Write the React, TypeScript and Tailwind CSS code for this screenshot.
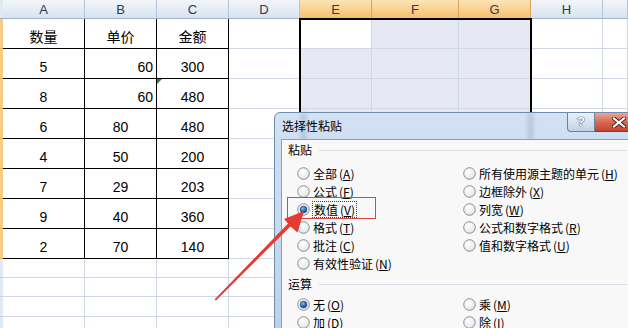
import React from 'react';
import clsx from 'clsx';

const COLS = ['A', 'B', 'C', 'D', 'E', 'F', 'G', 'H', ''];

const DATA: string[][] = [
  ['数量', '单价', '金额'],
  ['5', '60', '300'],
  ['8', '60', '480'],
  ['6', '80', '480'],
  ['4', '50', '200'],
  ['7', '29', '203'],
  ['9', '40', '360'],
  ['2', '70', '140'],
];

const ROW_COUNT = 12;

function HeaderCell({ label, sel }: { label: string; sel: boolean }) {
  return (
    <div
      className={clsx(
        'flex items-center justify-center border-r border-b text-[13px] leading-none text-[#2c3b4e]',
        sel
          ? 'bg-linear-to-b from-[#fde4b6] to-[#f5c06b] border-r-[#dba458] border-b-[#c9954c]'
          : 'bg-linear-to-b from-[#f2f6fb] to-[#d9e3ee] border-r-[#b6c5d7] border-b-[#9fb3c9]'
      )}
    >
      {label}
    </div>
  );
}

function Cell({ r, c }: { r: number; c: number }) {
  const inTable = r <= 8 && c <= 3;
  const inSel = r <= 8 && c >= 5 && c <= 7;
  const active = r === 1 && c === 5;
  const text = inTable ? DATA[r - 1][c - 1] : '';
  const right = c === 2 && (r === 2 || r === 3);
  return (
    <div
      className={clsx(
        'relative flex items-end border-r border-b text-[14px] leading-[17px] text-black',
        inTable ? 'border-black' : 'border-[#d0d7e5]',
        inSel && !active ? 'bg-[#e6e9f3]' : 'bg-white',
        right ? 'justify-end pr-[3px]' : 'justify-center'
      )}
    >
      {r === 3 && c === 3 && (
        <span className="absolute left-0 top-0 h-0 w-0 border-t-[5px] border-r-[5px] border-t-[#1d8a2c] border-r-transparent" />
      )}
      <span className="pb-[2px]">{text}</span>
    </div>
  );
}

function Sheet() {
  const cells: React.ReactNode[] = [];
  cells.push(<div key="corner" className="border-b border-[#9fb3c9] bg-[#dfe8f3]" />);
  COLS.forEach((l, i) =>
    cells.push(<HeaderCell key={'h' + i} label={l} sel={i >= 4 && i <= 6} />)
  );
  for (let r = 1; r <= ROW_COUNT; r++) {
    cells.push(
      <div
        key={'rh' + r}
        className={clsx(
          'border-b',
          r <= 8 ? 'bg-[#f7cd86] border-[#e4ae5c]' : 'bg-[#e1e9f3] border-[#c5d3e3]'
        )}
      />
    );
    for (let c = 1; c <= 9; c++) cells.push(<Cell key={r + '-' + c} r={r} c={c} />);
  }
  return (
    <div className="grid grid-cols-[3px_82px_72px_72px_71px_72px_87px_72px_72px_25px] grid-rows-[19px_repeat(8,30px)_19px_19px_20px_20px]">
      {cells}
    </div>
  );
}

function Radio({ checked }: { checked?: boolean }) {
  return (
    <svg width="13" height="13" viewBox="0 0 13 13" className="shrink-0">
      <circle cx="6.5" cy="6.5" r="5.8" fill="url(#radioBg)" stroke="#8d9196" strokeWidth="1" />
      {checked && <circle cx="6.5" cy="6.5" r="3.4" fill="url(#radioDot)" stroke="#1d4f86" strokeWidth="0.6" />}
    </svg>
  );
}

function Option({ label, acc, checked, focus }: { label: string; acc: string; checked?: boolean; focus?: boolean }) {
  return (
    <div className="flex h-[18px] items-center">
      <Radio checked={checked} />
      <span
        className={clsx(
          'ml-[3px] leading-[15px]',
          focus && 'outline outline-1 outline-dotted outline-[#444] px-px'
        )}
      >
        {label}
        <span className="ml-[2px]">(<u>{acc}</u>)</span>
      </span>
    </div>
  );
}

function Section({ title }: { title: string }) {
  return (
    <div className="flex h-[18px] items-center pl-[6px]">
      <span>{title}</span>
      <div className="ml-[7px] mr-[6px] h-px flex-1 bg-[#d6dee7]" />
    </div>
  );
}

function Dialog() {
  return (
    <div className="absolute left-[274px] top-[112px] flex h-[220px] w-[360px] flex-col rounded-tl-[6px] border border-[#6f8cae] bg-linear-to-b from-[#d2e1f3] to-[#bcd2ea] font-['Noto_Sans_CJK_SC',sans-serif] text-[12px] text-black">
      <div className="absolute left-[26px] top-0 h-[230px] w-[5px] bg-[#7d8ea3]/35 blur-[2px]" />
      <div className="absolute left-[253px] top-0 h-[28px] w-[5px] bg-[#7d8ea3]/35 blur-[2px]" />
      <div className="relative flex h-[28px] items-start">
        <span className="pl-[7px] pt-[5px] leading-[16px]">选择性粘贴</span>
        <div className="ml-auto mr-[-10px] flex">
          <div className="flex h-[19px] w-[28px] items-center justify-center rounded-bl-[4px] border border-t-0 border-[#6b819d] bg-linear-to-b from-[#eaf1f8] to-[#c2d3e7] font-['Liberation_Sans',sans-serif] text-[13px] font-bold text-white [text-shadow:0_0_1px_#334,0_0_1px_#334]">
            ?
          </div>
          <div className="flex h-[19px] w-[48px] items-center justify-center border border-t-0 border-l-0 border-[#7a3a2e] bg-linear-to-b from-[#eaa597] via-[#d86a55] to-[#c5432c]">
            <svg width="14" height="11" viewBox="0 0 14 11">
              <path d="M2 1.5 L12 9.5 M12 1.5 L2 9.5" stroke="#4a1b12" strokeWidth="4" strokeLinecap="square" />
              <path d="M2 1.5 L12 9.5 M12 1.5 L2 9.5" stroke="#fff" strokeWidth="2.2" strokeLinecap="square" />
            </svg>
          </div>
        </div>
      </div>
      <div className="relative ml-[6px] flex-1 border-l border-t border-[#8aa0ba] bg-[#f8f8f8] pt-px">
        <Section title="粘贴" />
        <div className="mt-[5px] flex pl-[15px]">
          <div className="flex w-[166px] flex-col">
            <Option label="全部" acc="A" />
            <Option label="公式" acc="F" />
            <Option label="数值" acc="V" checked focus />
            <Option label="格式" acc="T" />
            <Option label="批注" acc="C" />
            <Option label="有效性验证" acc="N" />
          </div>
          <div className="flex flex-col">
            <Option label="所有使用源主题的单元" acc="H" />
            <Option label="边框除外" acc="X" />
            <Option label="列宽" acc="W" />
            <Option label="公式和数字格式" acc="R" />
            <Option label="值和数字格式" acc="U" />
          </div>
        </div>
        <div className="mt-[3px]">
          <Section title="运算" />
        </div>
        <div className="mt-[2px] flex pl-[15px]">
          <div className="flex w-[166px] flex-col">
            <Option label="无" acc="O" checked />
            <Option label="加" acc="D" />
          </div>
          <div className="flex flex-col">
            <Option label="乘" acc="M" />
            <Option label="除" acc="I" />
          </div>
        </div>
      </div>
    </div>
  );
}

export default function App() {
  return (
    <div className="relative h-[328px] w-[628px] overflow-hidden bg-white font-['Liberation_Sans','Noto_Sans_CJK_SC',sans-serif]">
      <svg width="0" height="0" className="absolute">
        <defs>
          <radialGradient id="radioBg" cx="0.4" cy="0.35" r="0.75">
            <stop offset="0" stopColor="#ffffff" />
            <stop offset="0.7" stopColor="#e9eaeb" />
            <stop offset="1" stopColor="#c9cccf" />
          </radialGradient>
          <radialGradient id="radioDot" cx="0.4" cy="0.35" r="0.7">
            <stop offset="0" stopColor="#8cc4f0" />
            <stop offset="0.5" stopColor="#2d74bb" />
            <stop offset="1" stopColor="#163f72" />
          </radialGradient>
        </defs>
      </svg>
      <Sheet />
      {/* selection outline E1:G8 */}
      <div className="pointer-events-none absolute left-[299px] top-[18px] h-[242px] w-[233px] border-2 border-black" />
      <Dialog />
      {/* annotation box */}
      <div className="pointer-events-none absolute left-[287px] top-[197px] h-[22px] w-[89px] border border-[#d8473e]" />
      <svg className="pointer-events-none absolute left-0 top-0" width="628" height="328" viewBox="0 0 628 328">
        <polygon
          points="214.5,299.5 288,223.5 284,219 304,211 297.5,232.5 290.5,226.5 216,300.5"
          fill="#e63b34"
        />
      </svg>
    </div>
  );
}
